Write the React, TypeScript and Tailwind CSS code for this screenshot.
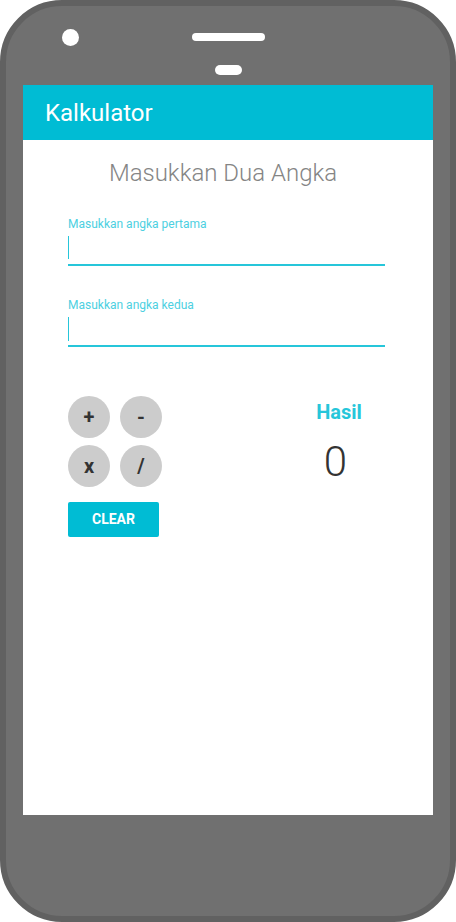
import { useState } from 'react';

const ops = ['+', '-', 'x', '/'];

export default function App() {
  const [hasil, setHasil] = useState(0);

  return (
    <div className="w-[456px] h-[922px] bg-white" style={{ fontFamily: 'Roboto, "Liberation Sans", sans-serif' }}>
      {/* Phone body */}
      <div className="relative flex h-full w-full flex-col rounded-[62px] border-[6px] border-[#616161] bg-[#707070]">
        {/* Camera */}
        <div className="absolute left-[56px] top-[23px] h-[17px] w-[17px] rounded-full bg-white" />

        {/* Speaker + sensor */}
        <div className="flex flex-col items-center pt-[27px]">
          <div className="h-[8px] w-[73px] rounded-full bg-white" />
          <div className="mt-[24px] h-[10px] w-[27px] rounded-full bg-white" />
        </div>

        {/* Screen */}
        <div className="mx-[17px] mt-[10px] flex h-[730px] flex-col bg-white">
          <header className="flex h-[55px] items-center bg-[#00BCD4] pl-[22px]">
            <span className="text-[24px] leading-[28px] text-white">Kalkulator</span>
          </header>

          <main className="flex flex-col pl-[45px] pr-[48px] pt-[19px]">
            <h1 className="pr-[7px] text-center text-[24px] font-light leading-[28px] text-[#858585]">Masukkan Dua Angka</h1>

            <div className="mt-[30px] flex flex-col">
              <label className="text-[12px] leading-[14px] text-[#4DD0E1]">Masukkan angka pertama</label>
              <div className="flex h-[35px] flex-col border-b-2 border-[#26C6DA] pt-[5px]">
                <div className="h-[23px] w-px bg-[#26C6DA]" />
              </div>
            </div>

            <div className="mt-[32px] flex flex-col">
              <label className="text-[12px] leading-[14px] text-[#4DD0E1]">Masukkan angka kedua</label>
              <div className="flex h-[35px] flex-col border-b-2 border-[#26C6DA] pt-[5px]">
                <div className="h-[24px] w-px bg-[#26C6DA]" />
              </div>
            </div>

            <div className="mt-[49px] flex justify-between">
              <div className="flex flex-col">
                <div className="grid grid-cols-[42px_42px] gap-x-[10px] gap-y-[7px]">
                  {ops.map((op) => (
                    <button
                      key={op}
                      type="button"
                      className="flex h-[42px] w-[42px] items-center justify-center rounded-full bg-[#CCCCCC] text-[20px] font-bold text-[#333333]"
                    >
                      {op}
                    </button>
                  ))}
                </div>
                <button
                  type="button"
                  onClick={() => setHasil(0)}
                  className="mt-[15px] h-[35px] w-[91px] rounded-[2px] bg-[#00BCD4] text-[14px] font-bold text-white"
                >
                  CLEAR
                </button>
              </div>

              <div className="flex w-[92px] flex-col items-center pt-[4px]">
                <span className="text-[20px] font-bold leading-[24px] text-[#26C6DA]">Hasil</span>
                <span className="mt-[14px] pr-[7px] text-[42px] font-light leading-[48px] text-[#333333]">{hasil}</span>
              </div>
            </div>
          </main>
        </div>
      </div>
    </div>
  );
}
